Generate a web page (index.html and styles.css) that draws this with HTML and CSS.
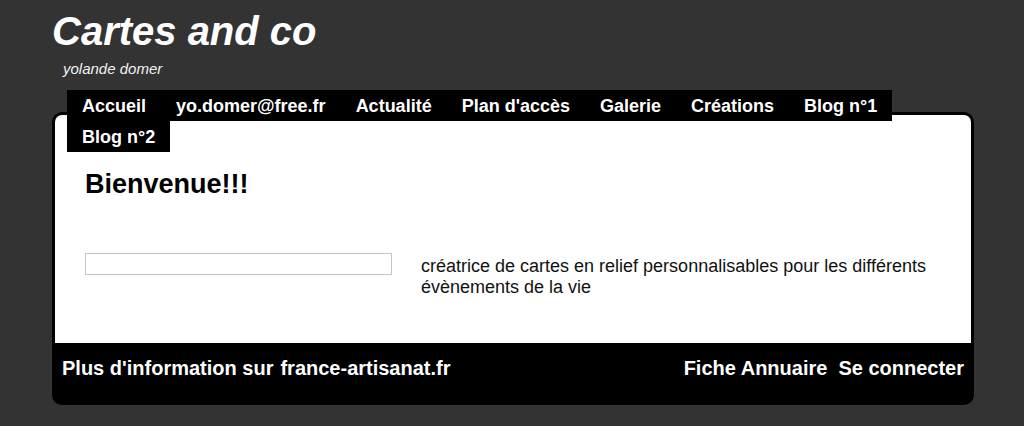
FILE: index.html
```html
<!doctype html>
<html lang="fr">
  <head>
    <meta charset="UTF-8" />
    <meta name="viewport" content="width=device-width, initial-scale=1.0" />
    <title>Cartes and co</title>
    <link rel="stylesheet" href="styles.css">
  </head>
  <body>
    <div class="page">
      <header class="site-header">
        <h1 class="site-title">Cartes and co</h1>
        <p class="site-subtitle">yolande domer</p>
      </header>

      <nav class="main-nav">
        <a href="#">Accueil</a>
        <a href="#">yo.domer@free.fr</a>
        <a href="#">Actualité</a>
        <a href="#">Plan d'accès</a>
        <a href="#">Galerie</a>
        <a href="#">Créations</a>
        <a href="#">Blog n°1</a>
        <a href="#">Blog n°2</a>
      </nav>

      <div class="main-box">
        <div class="content">
          <h2>Bienvenue!!!</h2>
          <div class="intro">
            <div class="picture-frame"></div>
            <p class="intro-text">
              créatrice de cartes en relief personnalisables pour les différents
              évènements de la vie
            </p>
          </div>
        </div>

        <footer class="site-footer">
          <div class="footer-left">
            <span>Plus d'information sur</span>
            <a href="#">france-artisanat.fr</a>
          </div>
          <div class="footer-right">
            <a href="#">Fiche Annuaire</a>
            <a href="#">Se connecter</a>
          </div>
        </footer>
      </div>
    </div>
  </body>
</html>
```

FILE: styles.css
```css
body {
  font-family: "Liberation Sans", Arial, Helvetica, sans-serif;
  background-color: #333333;
  margin: 0;
  color: #000;
}

a {
  color: inherit;
  text-decoration: none;
}

.page {
  width: 922px;
  margin-left: 52px;
}

.site-title {
  margin: 8px 0 0;
  font-size: 40px;
  line-height: 46px;
  font-weight: bold;
  font-style: italic;
  color: #fff;
}

.site-subtitle {
  margin: 6px 0 0;
  padding-left: 11px;
  font-size: 15px;
  line-height: 17px;
  font-style: italic;
  color: #f2f2f2;
}

.main-nav {
  position: relative;
  z-index: 1;
  display: flex;
  flex-wrap: wrap;
  margin: 13px 15px 0;
}

.main-nav a {
  background-color: #000;
  color: #fff;
  font-size: 18px;
  font-weight: bold;
  line-height: 21px;
  padding: 6px 15px 4px;
}

.main-box {
  margin-top: -40px;
  border: 3px solid #000;
  border-radius: 10px;
  background-color: #000;
  overflow: hidden;
}

.content {
  background-color: #fff;
  padding: 54px 30px 45px;
}

.content h2 {
  margin: 0 0 54px;
  font-size: 27px;
  line-height: 30px;
  font-weight: bold;
}

.intro {
  display: grid;
  grid-template-columns: 307px 1fr;
  column-gap: 29px;
  align-items: start;
}

.picture-frame {
  height: 20px;
  border: 1px solid #c4c4c4;
}

.intro-text {
  margin: 3px 0 0;
  font-size: 18px;
  line-height: 21px;
  color: #111;
}

.site-footer {
  display: flex;
  justify-content: space-between;
  color: #fff;
  padding: 14px 7px 22px;
  font-size: 20px;
  font-weight: bold;
  line-height: 23px;
}

.footer-left {
  display: flex;
  gap: 7px;
}

.footer-right {
  display: flex;
  gap: 11px;
}
```
